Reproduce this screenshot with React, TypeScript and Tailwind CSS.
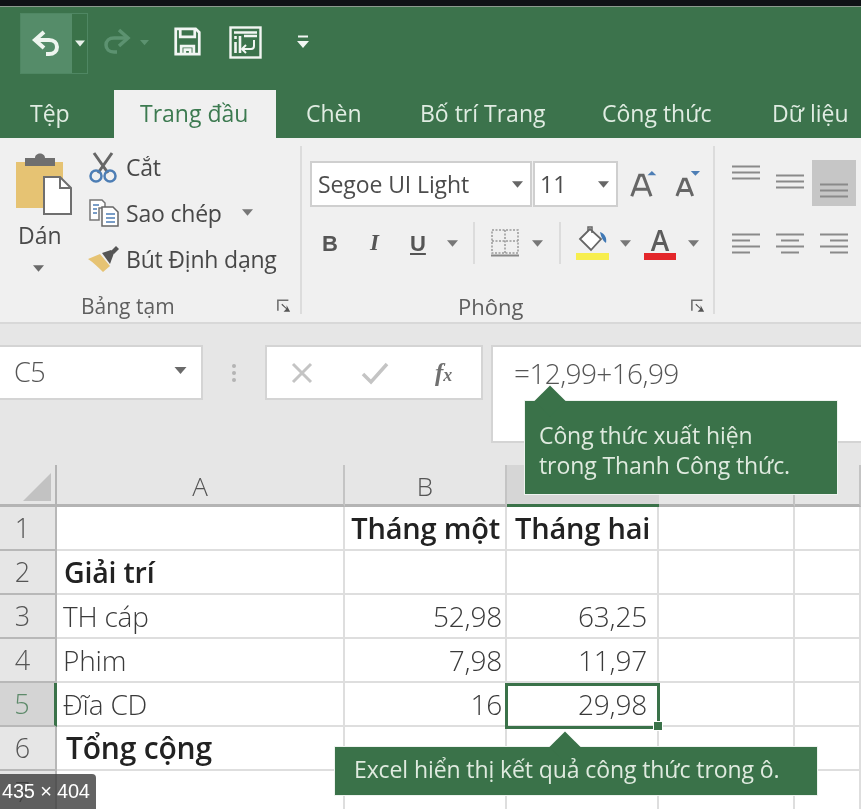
import type { ReactNode } from "react"

const FONT = "font-['Open_Sans','Noto_Sans',sans-serif]"

function Caret({ className = "" }: { className?: string }) {
  return (
    <svg width="12" height="7" viewBox="0 0 12 7" className={className}>
      <path d="M0 0h12L6 7z" fill="currentColor" />
    </svg>
  )
}

function Launcher() {
  return (
    <svg width="14" height="14" viewBox="0 0 16 15" className="text-[#6f6f6f]">
      <path d="M1 13V1h12" fill="none" stroke="currentColor" strokeWidth="1.8" />
      <path d="M6 5l5 5V6.5L15 14H7.5L10.5 11 5 6z" fill="#555" />
    </svg>
  )
}

function Separator() {
  return <div className="w-[2px] h-[42px] bg-[#dcdcdc]" />
}

function QuickAccess() {
  return (
    <div className="h-[83px] flex items-start pl-[20px] pt-[6px] text-white">
      {/* undo split button */}
      <div className="w-[68px] h-[61px] flex bg-[#558c69] border border-[#4f8763]">
        <div className="w-[51px] flex items-center justify-center">
          <svg width="32" height="30" viewBox="0 0 32 30">
            <path d="M13 3L4 11l9 8" fill="none" stroke="#eef5ef" strokeWidth="4" />
            <path d="M5 11h13c5 0 8 3 8 7s-3 7-8 7h-3" fill="none" stroke="#eef5ef" strokeWidth="4" />
          </svg>
        </div>
        <div className="flex-1 bg-[#3a7249] flex items-center justify-center">
          <Caret className="text-[#e8f0ea] w-[10px]" />
        </div>
      </div>
      {/* redo */}
      <svg width="32" height="30" viewBox="0 0 32 30" className="ml-[12px] mt-[14px]">
        <path d="M19 3l9 8-9 8" fill="none" stroke="#5c9270" strokeWidth="3.5" />
        <path d="M27 11H14c-5 0-8 3-8 7s3 7 8 7h3" fill="none" stroke="#5c9270" strokeWidth="3.5" />
      </svg>
      <Caret className="text-[#5c9270] w-[9px] ml-[8px] mt-[26px]" />
      {/* save */}
      <svg width="29" height="29" viewBox="0 0 30 32" className="ml-[24px] mt-[14px]">
        <path d="M2 2h22l4 4v24H2z" fill="none" stroke="#f2f6f3" strokeWidth="3" />
        <path d="M7 2v9h16V2" fill="none" stroke="#f2f6f3" strokeWidth="3" />
        <path d="M8 30v-9h14v9M12 30v-5h6v5" fill="none" stroke="#f2f6f3" strokeWidth="3" />
      </svg>
      {/* touch mode / form */}
      <svg width="33" height="33" viewBox="0 0 33 33" className="ml-[27px] mt-[13px]">
        <rect x="1.5" y="1.5" width="30" height="30" fill="none" stroke="#f2f6f3" strokeWidth="2.4" />
        <path d="M5 6.5h23M6.5 10v3M6.5 16v11M11 10v17M15 10h13" stroke="#f2f6f3" strokeWidth="2.6" fill="none" />
        <path d="M25 14v6c0 2-1 3-3 3h-8M17 19l-4 4 4 4" stroke="#f2f6f3" strokeWidth="2" fill="none" />
      </svg>
      {/* customize */}
      <svg width="12" height="14" viewBox="0 0 12 14" className="ml-[35px] mt-[22px]">
        <path d="M1 1.5h10" stroke="#f2f6f3" strokeWidth="2" />
        <path d="M0 6h12l-6 7z" fill="#f2f6f3" />
      </svg>
    </div>
  )
}

function Tabs() {
  const tabs = [
    { label: "Tệp", w: "w-[114px] pl-[30px]" },
    { label: "Trang đầu", w: "w-[162px] pl-[26px]", active: true },
    { label: "Chèn", w: "w-[114px] pl-[30px]" },
    { label: "Bố trí Trang", w: "w-[182px] pl-[30px]" },
    { label: "Công thức", w: "w-[170px] pl-[30px]" },
    { label: "Dữ liệu", w: "w-[119px] pl-[30px]" },
  ]
  return (
    <div className="h-[48px] flex items-end">
      {tabs.map((t) => (
        <div
          key={t.label}
          className={`h-[48px] pt-[5px] text-[23px] leading-[36px] whitespace-nowrap ${t.w} ${
            t.active ? "bg-[#f0f0f0] text-[#3c7a50]" : "text-[#e0ece2]"
          }`}
        >
          {t.label}
        </div>
      ))}
    </div>
  )
}

function ClipboardGroup() {
  const rows: { label: string; icon: ReactNode; caret?: boolean }[] = [
    {
      label: "Cắt",
      icon: (
        <svg width="30" height="32" viewBox="0 0 30 32">
          <path d="M6 2l14 20M24 2L10 22" stroke="#666" strokeWidth="3" fill="none" />
          <circle cx="8" cy="25" r="5.5" fill="none" stroke="#4d7eb5" strokeWidth="2.5" />
          <circle cx="22" cy="25" r="5.5" fill="none" stroke="#4d7eb5" strokeWidth="2.5" />
        </svg>
      ),
    },
    {
      label: "Sao chép",
      caret: true,
      icon: (
        <svg width="32" height="30" viewBox="0 0 32 30">
          <path d="M2 2h12l3 3v5H11v12H2z" fill="#fff" stroke="#777" strokeWidth="1.5" />
          <path d="M14 9h11l5 5v14H14z" fill="#fff" stroke="#666" strokeWidth="1.5" />
          <path d="M5 7h6M5 11h4M5 15h4M18 16h9M18 20h9M18 24h9" stroke="#4d7eb5" strokeWidth="1.6" />
        </svg>
      ),
    },
    {
      label: "Bút Định dạng",
      icon: (
        <svg width="32" height="28" viewBox="0 0 32 28">
          <path d="M0 14l12-5 10 12-7 6C10 22 6 18 0 14z" fill="#e6c373" />
          <path d="M14 8l9-3 3 3-4 11z" fill="#555" />
          <path d="M23 6l5-5 3 3-5 5z" fill="#555" />
        </svg>
      ),
    },
  ]
  return (
    <div className="w-[302px] h-[168px] shrink-0 border-r-2 border-[#dcdcdc] flex flex-col">
      <div className="h-[148px] shrink-0 flex">
        {/* paste */}
        <div className="w-[88px] pl-[15px] pt-[7px] flex flex-col items-start">
          <svg width="58" height="62" viewBox="0 0 58 62">
            <path d="M1 9h47v46H1z" fill="#e6c373" />
            <path d="M10 5h10c0-6 10-6 10 0h10v8H10z" fill="#6f6f6f" />
            <path d="M29 24h16l11 11v26H29z" fill="#fff" stroke="#6f6f6f" strokeWidth="2" />
            <path d="M45 24v11h11" fill="none" stroke="#6f6f6f" strokeWidth="2" />
          </svg>
          <div className="mt-[6px] ml-[3px] text-[23px] leading-[28px] text-[#4a4a4a]">Dán</div>
          <Caret className="text-[#6a6a6a] ml-[18px] mt-[16px] w-[11px]" />
        </div>
        {/* cut, copy, format painter */}
        <div className="pt-[4px] flex flex-col gap-[13px]">
          {rows.map((r) => (
            <div key={r.label} className="h-[33px] flex items-center">
              <div className="w-[38px] shrink-0">{r.icon}</div>
              <span className="text-[23px] leading-[30px] tracking-[-0.2px] text-[#484848] whitespace-nowrap">
                {r.label}
              </span>
              {r.caret && <Caret className="text-[#777] ml-[20px] w-[11px]" />}
            </div>
          ))}
        </div>
      </div>
      <div className="flex items-center justify-between pl-[81px] pr-[9px]">
        <span className="text-[21px] leading-[24px] text-[#5f5f5f]">Bảng tạm</span>
        <Launcher />
      </div>
    </div>
  )
}

function FontGroup() {
  return (
    <div className="w-[413px] h-[168px] shrink-0 border-r-2 border-[#dcdcdc] flex flex-col">
      <div className="h-[148px] shrink-0 pl-[8px] pt-[15px]">
        <div className="flex items-center">
          <div className="w-[222px] h-[46px] bg-white border-2 border-[#cfcfcf] flex items-center justify-between pl-[6px] pr-[7px]">
            <span className="text-[23px] tracking-[-0.1px] text-[#4c4c4c] whitespace-nowrap">Segoe UI Light</span>
            <Caret className="text-[#666] w-[11px]" />
          </div>
          <div className="ml-[1px] w-[85px] h-[46px] bg-white border-2 border-[#cfcfcf] flex items-center justify-between pl-[5px] pr-[7px]">
            <span className="text-[23px] text-[#4c4c4c]">11</span>
            <Caret className="text-[#666] w-[11px]" />
          </div>
          <svg width="28" height="28" viewBox="0 0 32 32" className="ml-[12px]">
            <path d="M2 30L11 6h4l9 24M6 22h14" fill="none" stroke="#666" strokeWidth="3.5" />
            <path d="M20 6l5-5 5 5z" fill="#4d7eb5" />
          </svg>
          <svg width="26" height="28" viewBox="0 0 28 30" className="ml-[17px]">
            <path d="M2 28L9 10h3l7 18M5 22h11" fill="none" stroke="#666" strokeWidth="3.2" />
            <path d="M17 1h10l-5 5z" fill="#4d7eb5" />
          </svg>
        </div>
        <div className="mt-[14px] flex items-center h-[44px] text-[#555]">
          <span className="ml-[12px] w-[31px] text-[22px] font-bold font-['Liberation_Sans',sans-serif]">B</span>
          <span className="ml-[17px] w-[31px] text-[23px] font-bold italic font-['Liberation_Serif',serif]">I</span>
          <span className="ml-[9px] w-[30px] text-[22px] font-bold underline font-['Liberation_Sans',sans-serif]">U</span>
          <Caret className="text-[#777] w-[11px] ml-[7px]" />
          <div className="ml-[15px]"><Separator /></div>
          <svg width="28" height="28" viewBox="0 0 28 28" className="ml-[16px]">
            <path d="M1 1h26v23H1zM14 1v23M1 12h26" fill="none" stroke="#999" strokeWidth="1.5" strokeDasharray="2 1.5" />
            <path d="M0 26.5h28" stroke="#888" strokeWidth="2" />
          </svg>
          <Caret className="text-[#777] w-[11px] ml-[13px]" />
          <div className="ml-[16px]"><Separator /></div>
          <div className="ml-[14px] flex flex-col items-center">
            <svg width="34" height="26" viewBox="0 0 34 26">
              <path d="M5 13L15 3l11 10-10 11z" fill="#fff" stroke="#666" strokeWidth="1.8" />
              <path d="M13 5V1h4v6" fill="none" stroke="#666" strokeWidth="1.5" />
              <path d="M25 6c5 2 7 6 6 11-3-2-5-6-6-11z" fill="#3f78b5" />
            </svg>
            <div className="w-[33px] h-[7px] bg-[#f7ee4e] mt-[1px]" />
          </div>
          <Caret className="text-[#777] w-[11px] ml-[11px]" />
          <div className="ml-[13px] flex flex-col items-center">
            <span className="h-[25px] text-[28px] leading-[26px] font-semibold text-[#5c5c5c]">A</span>
            <div className="w-[32px] h-[7px] bg-[#e3262a] mt-[1px]" />
          </div>
          <Caret className="text-[#777] w-[11px] ml-[12px]" />
        </div>
      </div>
      <div className="flex items-center justify-between pl-[156px] pr-[8px]">
        <span className="text-[22px] leading-[24px] text-[#5f5f5f]">Phông</span>
        <Launcher />
      </div>
    </div>
  )
}

function Lines({ kind }: { kind: "v" | "left" | "center" | "right" }) {
  const rows: Record<string, string> = {
    v: "M0 1.5h28M0 7.5h28M0 13.5h28",
    left: "M0 1.5h28M0 7.5h18M0 13.5h28M0 19.5h18",
    center: "M0 1.5h28M5 7.5h18M0 13.5h28M5 19.5h18",
    right: "M0 1.5h28M10 7.5h18M0 13.5h28M10 19.5h18",
  }
  return (
    <svg width="28" height="21" viewBox="0 0 28 21">
      <path d={rows[kind]} stroke="#8a8a8a" strokeWidth="2" fill="none" />
    </svg>
  )
}

function AlignGroup() {
  return (
    <div className="flex-1 h-[168px] pt-[14px]">
      <div className="flex">
        <div className="ml-[8px] w-[45px] pt-[5px] flex justify-center"><Lines kind="v" /></div>
        <div className="w-[44px] pt-[14px] flex justify-center"><Lines kind="v" /></div>
        <div className="w-[44px] h-[46px] pt-[23px] bg-[#c6c6c6] flex justify-center"><Lines kind="v" /></div>
      </div>
      <div className="flex mt-[27px]">
        <div className="ml-[8px] w-[45px] flex justify-center"><Lines kind="left" /></div>
        <div className="w-[44px] flex justify-center"><Lines kind="center" /></div>
        <div className="w-[44px] flex justify-center"><Lines kind="right" /></div>
      </div>
    </div>
  )
}

function FormulaBar() {
  return (
    <div className="h-[143px] bg-[#e6e6e6] border-t-2 border-[#d8d8d8] pt-[21px] flex items-start">
      <div className="w-[203px] h-[55px] bg-white border-2 border-l-0 border-[#d4d4d4] flex items-center justify-between pl-[14px] pr-[13px]">
        <span className="text-[27px] font-light tracking-[-0.4px] text-[#555]">C5</span>
        <Caret className="text-[#6a6a6a] w-[15px] -mt-[4px]" />
      </div>
      <div className="w-[62px] h-[55px] flex flex-col items-center justify-center gap-[3px]">
        <div className="w-[4px] h-[4px] rounded-full bg-[#b4b4b4]" />
        <div className="w-[4px] h-[4px] rounded-full bg-[#b4b4b4]" />
        <div className="w-[4px] h-[4px] rounded-full bg-[#b4b4b4]" />
      </div>
      <div className="w-[218px] h-[55px] bg-white border-2 border-[#d4d4d4] flex items-center pl-[23px]">
        <svg width="24" height="24" viewBox="0 0 24 24">
          <path d="M3 3l18 18M21 3L3 21" stroke="#c4c4c4" strokeWidth="3" />
        </svg>
        <svg width="28" height="24" viewBox="0 0 28 24" className="ml-[47px]">
          <path d="M2 13l8 8L26 3" fill="none" stroke="#c4c4c4" strokeWidth="3.5" />
        </svg>
        <span className="ml-[46px] text-[25px] italic font-bold text-[#707070] font-['Liberation_Serif',serif]">
          f<span className="text-[18px]">x</span>
        </span>
      </div>
      <div className="ml-[8px] flex-1 h-[98px] bg-white border-2 border-r-0 border-[#d4d4d4] pl-[21px] pt-[6px] text-[28px] leading-[40px] font-light tracking-[-0.6px] text-[#555]">
        =12,99+16,99
      </div>
    </div>
  )
}

// the callout covers the C and D letters in the reference
const COLS = [
  { id: "A", label: "A" },
  { id: "B", label: "B" },
  { id: "C", label: "" },
  { id: "D", label: "" },
  { id: "E", label: "" },
]
const ROWS: { n: number; a?: string; boldA?: string; b?: string; c?: string; head?: boolean }[] = [
  { n: 1, b: "Tháng một", c: "Tháng hai", head: true },
  { n: 2, a: "Giải trí", boldA: "pl-[7px] text-[28.5px]" },
  { n: 3, a: "TH cáp", b: "52,98", c: "63,25" },
  { n: 4, a: "Phim", b: "7,98", c: "11,97" },
  { n: 5, a: "Đĩa CD", b: "16", c: "29,98" },
  { n: 6, a: "Tổng cộng", boldA: "pl-[9px] text-[30px]" },
  { n: 7 },
]

function Sheet() {
  const cell = "border-r-2 border-b-2 border-[#dedede] bg-white leading-[42px] whitespace-nowrap"
  const body = "text-[28px] font-light tracking-[-0.2px] text-[#3a3a3a]"
  const bold = "text-[29px] font-semibold text-[#222] tracking-[-0.2px]"
  return (
    <div className="relative grid grid-cols-[57px_288px_162px_152px_136px_66px] grid-rows-[42px_44px_44px_44px_44px_44px_44px_44px]">
      {/* header row */}
      <div className="bg-[#e6e6e6] border-r-2 border-b-[3px] border-[#b4b4b4] relative">
        <svg width="28" height="28" viewBox="0 0 28 28" className="absolute left-[23px] top-[8px]">
          <path d="M28 0v28H0z" fill="#c2c2c2" />
        </svg>
      </div>
      {COLS.map((c) => (
        <div
          key={c.id}
          className={`border-b-[3px] text-center text-[26px] leading-[42px] font-light text-[#555] ${
            c.id === "C" ? "bg-[#d6d6d6] border-[#3a7249]" : "bg-[#e6e6e6] border-[#b4b4b4] border-r-2 border-r-[#c4c4c4]"
          }`}
        >
          {c.label}
        </div>
      ))}
      {ROWS.map((r) => (
        <div key={r.n} className="contents">
          <div
            className={`border-b-2 pr-[10px] text-center text-[27px] leading-[42px] font-light ${
              r.n === 5
                ? "bg-[#d4d4d4] text-[#5d8a6a] border-[#b8b8b8] border-r-[3px] border-r-[#3a7249]"
                : "bg-[#e6e6e6] text-[#555] border-[#b8b8b8] border-r-2"
            }`}
          >
            {r.n}
          </div>
          <div className={`${cell} ${r.boldA ? `${r.boldA} font-semibold text-[#222] tracking-[-0.2px]` : `pl-[6px] ${body}`}`}>
            {r.a}
          </div>
          <div className={`${cell} text-right ${r.head ? `pr-[5px] ${bold}` : `pr-[3px] ${body}`}`}>{r.b}</div>
          <div className={`${cell} ${r.head ? `pl-[8px] ${bold}` : `pr-[10px] text-right ${body}`}`}>{r.c}</div>
          <div className={cell} />
          <div className={cell} />
        </div>
      ))}
      {/* active cell */}
      <div className="absolute left-[505px] top-[218px] w-[155px] h-[46px] border-[3px] border-[#3a7249]" />
      <div className="absolute left-[653px] top-[256px] w-[10px] h-[10px] bg-[#3a7249] border border-white" />
    </div>
  )
}

function Callout({ className, arrow, children }: { className: string; arrow: string; children: ReactNode }) {
  return (
    <div className={`absolute bg-[#3a7249] border border-[#eef3ef] text-[#dfeadf] text-[23px] tracking-[-0.1px] whitespace-nowrap ${className}`}>
      <div className={`absolute -top-[11px] w-[22px] h-[22px] rotate-45 bg-[#3a7249] ${arrow}`} />
      <div className="relative">{children}</div>
    </div>
  )
}

export default function App() {
  return (
    <div className={`relative w-[861px] h-[809px] overflow-hidden bg-white blur-[0.4px] ${FONT}`}>
      <div className="h-[6px] bg-[#0f1216]" />
      <div className="h-[1px] bg-[#8c9a8f]" />
      <div className="bg-[#3c734c]">
        <QuickAccess />
        <Tabs />
      </div>
      <div className="h-[184px] bg-[#f0f0f0] pt-[8px] flex">
        <ClipboardGroup />
        <FontGroup />
        <AlignGroup />
      </div>
      <FormulaBar />
      <Sheet />

      <Callout className="left-[524px] top-[400px] w-[314px] h-[95px] pl-[14px] pt-[19px] leading-[30px]" arrow="left-[14px]">
        <p>Công thức xuất hiện</p>
        <p>trong Thanh Công thức.</p>
      </Callout>
      <Callout className="left-[334px] top-[746px] w-[484px] h-[50px] pl-[19px] pt-[7px] leading-[30px]" arrow="left-[219px]">
        <p>Excel hiển thị kết quả công thức trong ô.</p>
      </Callout>

      {/* image size badge from the source page */}
      <div className="absolute left-0 bottom-0 w-[96px] h-[35px] rounded-tr-[4px] bg-[#3c3c3c]/80 text-white text-[20px] leading-[35px] pl-[2px] tracking-[-0.2px] font-['Liberation_Sans',sans-serif]">
        435 × 404
      </div>
    </div>
  )
}
